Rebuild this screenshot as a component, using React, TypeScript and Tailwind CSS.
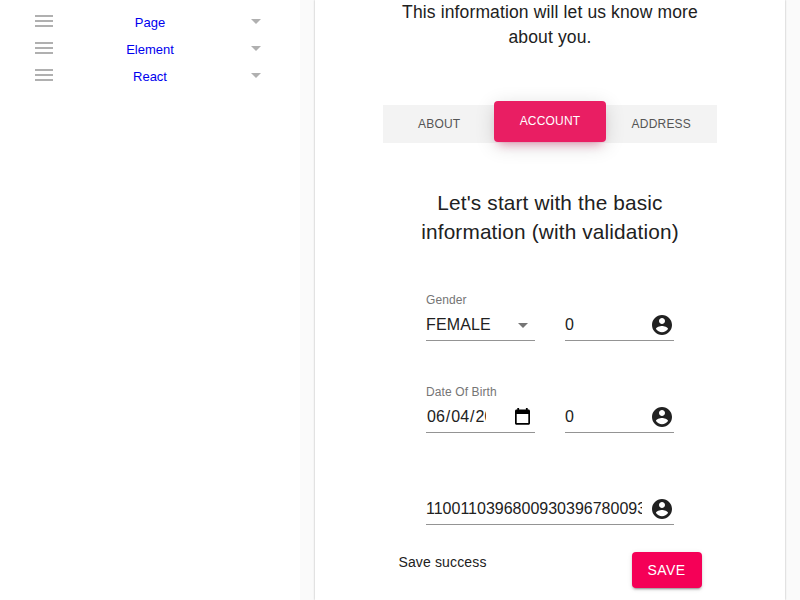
import React from "react";

const MENU = ["Page", "Element", "React"];

function AccountIcon() {
  return (
    <svg viewBox="0 0 24 24" className="mt-0.5 h-6 w-6 shrink-0 fill-[#212121]" aria-hidden="true">
      <path d="M12 2C6.48 2 2 6.48 2 12s4.48 10 10 10 10-4.48 10-10S17.52 2 12 2zm0 3c1.66 0 3 1.34 3 3s-1.34 3-3 3-3-1.34-3-3 1.34-3 3-3zm0 14.2c-2.5 0-4.71-1.28-6-3.22.03-1.99 4-3.08 6-3.08 1.99 0 5.97 1.09 6 3.08-1.29 1.94-3.5 3.22-6 3.22z" />
    </svg>
  );
}

function Arrow({ className }: { className: string }) {
  return (
    <svg viewBox="0 0 24 24" className={className} aria-hidden="true">
      <path d="M7 10l5 5 5-5z" />
    </svg>
  );
}

function MenuRow({ label }: { label: string }) {
  return (
    <div className="flex h-[27px] items-start">
      <div className="ml-[35px] mt-[2px] flex w-[18px] flex-col gap-[3px]">
        <div className="h-[2px] bg-[#b0b0b0]" />
        <div className="h-[2px] bg-[#b0b0b0]" />
        <div className="h-[2px] bg-[#b0b0b0]" />
      </div>
      <a className="flex-1 pl-[3px] text-center text-[13px] leading-[19px] text-[#0000ee]">{label}</a>
      <Arrow className="mr-8 -mt-[4px] h-6 w-6 fill-[#b0b0b0]" />
    </div>
  );
}

function Field({ label, children }: { label?: string; children: React.ReactNode }) {
  return (
    <div className="flex min-w-0 flex-1 flex-col">
      <div className="h-4 text-[12px] leading-4 tracking-[0.00938em] text-[#757575]">{label}</div>
      <div className="flex h-[33px] items-center border-b border-[#949494]">{children}</div>
    </div>
  );
}

function TextInput({ value }: { value: string }) {
  return (
    <>
      <input
        readOnly
        value={value}
        className="mt-0.5 mr-2 h-[19px] w-0 min-w-0 flex-1 tracking-normal outline-none"
      />
      <AccountIcon />
    </>
  );
}

function DateInput({ parts }: { parts: string[] }) {
  return (
    <>
      <div className="flex w-[60px] overflow-hidden leading-[19px]">
        {parts.map((part, i) => (
          <React.Fragment key={i}>
            {i > 0 && <span>/</span>}
            <span className="px-px">{part}</span>
          </React.Fragment>
        ))}
      </div>
      <svg viewBox="0 0 15 17" className="ml-auto mr-[5px] h-[17px] w-[15px]" aria-hidden="true">
        <path
          fillRule="evenodd"
          d="M2.3 0h1.8v1.6h6.8V0h1.8v1.6h.8c.8 0 1.5.7 1.5 1.5v12.2c0 .8-.7 1.5-1.5 1.5h-12C.7 16.8 0 16.1 0 15.3V3.1c0-.8.7-1.5 1.5-1.5h.8zM1.7 6v9.1h11.6V6z"
        />
      </svg>
    </>
  );
}

export default function App() {
  return (
    <div
      className="flex h-[600px] w-[800px] overflow-hidden bg-[#fafafa] text-[#212121]"
      style={{ fontFamily: '"Liberation Sans", Arial, sans-serif' }}
    >
      <nav className="w-[300px] shrink-0 bg-white pt-[13px]">
        {MENU.map((m) => (
          <MenuRow key={m} label={m} />
        ))}
      </nav>
      <main className="ml-[15px] flex h-[600px] w-[470px] flex-col bg-white shadow-[0_0_2px_rgba(0,0,0,0.3)]">
        <h5 className="text-center text-[17.5px] leading-[25px] tracking-[0.0075em]">
          This information will let us know more
          <br />
          about you.
        </h5>
        <div className="mx-[68px] mt-[55px] grid h-[38px] grid-cols-3 bg-[#f3f3f3] text-center text-[12px] tracking-[0.2px] text-[#555555]">
          <div className="pl-px leading-[38px]">ABOUT</div>
          <div className="-mt-1 h-[41px] rounded-[4px] bg-[#e91e63] leading-[41px] text-white shadow-[0_4px_20px_0_rgba(0,0,0,0.14),0_7px_10px_-5px_rgba(233,30,99,0.4)]">
            ACCOUNT
          </div>
          <div className="leading-[38px]">ADDRESS</div>
        </div>
        <h4 className="mt-[45px] text-center text-[20.8px] leading-[29px] tracking-[0.00735em]">
          Let's start with the basic
          <br />
          information (with validation)
        </h4>
        <div className="mx-[111px] mt-[46px] flex gap-[30px]">
          <Field label="Gender">
            <div className="mt-0.5 flex-1 tracking-[0.00938em]">FEMALE</div>
            <Arrow className="mt-0.5 h-6 w-6 fill-[#757575]" />
          </Field>
          <Field>
            <TextInput value="0" />
          </Field>
        </div>
        <div className="mx-[111px] mt-[43px] flex gap-[30px]">
          <Field label="Date Of Birth">
            <DateInput parts={["06", "04", "20"]} />
          </Field>
          <Field>
            <TextInput value="0" />
          </Field>
        </div>
        <div className="mx-[111px] mt-[43px] flex">
          <Field>
            <TextInput value="11001103968009303967800930" />
          </Field>
        </div>
        <div className="ml-[83.4px] mr-[83px] mt-[27px] flex items-start justify-between">
          <p className="text-[14px] leading-5 tracking-[0.01071em]">Save success</p>
          <button className="h-9 w-[70px] rounded-[4px] bg-[#f50057] pr-px text-[14px] tracking-[0.02857em] text-white shadow-[0_3px_1px_-2px_rgba(0,0,0,0.2),0_2px_2px_0_rgba(0,0,0,0.14),0_1px_5px_0_rgba(0,0,0,0.12)]">
            SAVE
          </button>
        </div>
      </main>
    </div>
  );
}
